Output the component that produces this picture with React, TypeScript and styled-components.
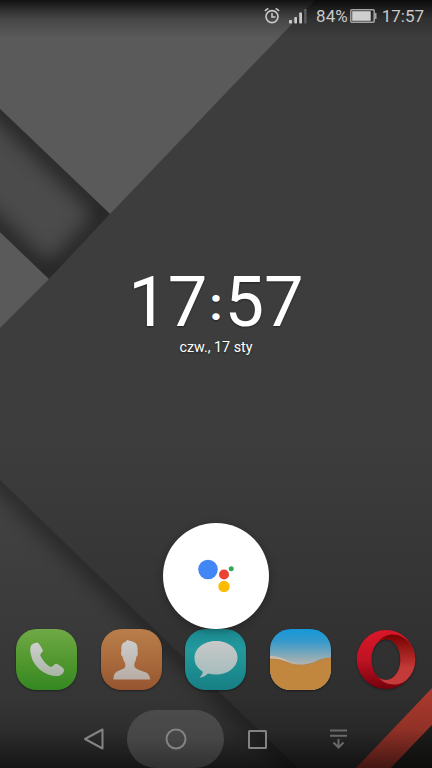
import React from "react";
import styled, { createGlobalStyle } from "styled-components";

const GlobalStyle = createGlobalStyle`
  * { box-sizing: border-box; }
  body { margin: 0; background: #3d3d3d; overflow: hidden; }
`;

const Screen = styled.main`
  position: relative;
  display: flex;
  flex-direction: column;
  width: 432px;
  height: 768px;
  overflow: hidden;
  font-family: Roboto, "Liberation Sans", sans-serif;
  isolation: isolate;
`;

const WallpaperArt = styled.svg`
  position: absolute;
  inset: 0;
  z-index: -1;
`;

const StatusBar = styled.header`
  display: flex;
  align-items: center;
  justify-content: flex-end;
  height: 32px;
  padding-right: 8px;
  color: #c9c9c9;
  font-size: 17px;
  line-height: 32px;
`;

const AlarmIcon = styled.svg`
  margin: 0 9px 1px 0;
`;

const SignalIcon = styled.svg`
  margin-right: 9px;
`;

const BatteryIcon = styled.svg`
  margin: 0 5px 1px 2px;
`;

const ClockWidget = styled.section`
  display: flex;
  flex-direction: column;
  align-items: center;
  margin-top: 235px;
  height: 256px;
  color: #fff;
  text-shadow: 0 1px 2px rgba(0, 0, 0, 0.45);
`;

const Time = styled.time`
  display: flex;
  font-size: 70.5px;
  line-height: 70px;
  height: 71px;
`;

const Colon = styled.span`
  width: 17px;
  text-align: center;
  font-size: 46px;
  font-weight: 700;
  line-height: 75px;
`;

const DateText = styled.span`
  font-size: 14.3px;
  line-height: 18px;
`;

const AssistantButton = styled.button`
  display: flex;
  flex: none;
  align-self: center;
  width: 106px;
  height: 106px;
  padding: 0;
  border: 0;
  border-radius: 50%;
  background: #fff;
  box-shadow: 0 2px 8px rgba(0, 0, 0, 0.3);
  z-index: 1;
`;

const Dock = styled.nav`
  display: flex;
  justify-content: space-between;
  height: 81px;
  padding: 0 16.5px 0 16px;
`;

const AppIcon = styled.svg`
  flex: none;
  filter: drop-shadow(0 1px 1px rgba(0, 0, 0, 0.4));
  overflow: visible;
`;

const NavBar = styled.footer`
  display: flex;
  flex: none;
  height: 58px;
  padding-left: 61px;
`;

const NavButton = styled.button<{ $width: number; $pressed?: boolean }>`
  display: flex;
  flex: none;
  align-items: center;
  justify-content: center;
  width: ${(p) => p.$width}px;
  height: 58px;
  padding: 0;
  border: 0;
  border-radius: 29px;
  background: ${(p) =>
    p.$pressed ? "linear-gradient(#4b4b4b, #464646 50%, #303030)" : "transparent"};
`;

const NavGlyph = styled.svg<{ $tone?: string }>`
  fill: none;
  stroke: ${(p) => p.$tone ?? "#838383"};
  stroke-width: 2;
`;

function Wallpaper() {
  return (
    <WallpaperArt width="432" height="768" viewBox="0 0 432 768" aria-hidden="true">
      <defs>
        <linearGradient id="topShade" x1="0" y1="0" x2="0" y2="1">
          <stop offset="0" stopColor="#000" stopOpacity=".82" />
          <stop offset=".2" stopColor="#000" stopOpacity=".56" />
          <stop offset=".5" stopColor="#000" stopOpacity=".22" />
          <stop offset="1" stopColor="#000" stopOpacity="0" />
        </linearGradient>
        <linearGradient id="bottomShade" x1="0" y1="0" x2="0" y2="1">
          <stop offset="0" stopColor="#000" stopOpacity="0" />
          <stop offset=".78" stopColor="#000" stopOpacity=".24" />
          <stop offset=".88" stopColor="#000" stopOpacity=".34" />
          <stop offset="1" stopColor="#000" stopOpacity=".7" />
        </linearGradient>
        <filter
          id="soft"
          filterUnits="userSpaceOnUse"
          x="-100"
          y="0"
          width="632"
          height="900"
          colorInterpolationFilters="sRGB"
        >
          <feGaussianBlur stdDeviation="11" />
        </filter>
        <clipPath id="channel">
          <path d="M0 109 110 214 49 279 0 232Z" />
        </clipPath>
        <clipPath id="corner">
          <path d="M0 480 298 768H0Z" />
        </clipPath>
      </defs>
      <path fill="#3d3d3d" d="M0 0h432v768H0z" />
      <path fill="#5a5a5a" d="M0 0H315L110 214 0 109ZM0 232l49 47-49 49Z" />
      <g clipPath="url(#channel)">
        <path fill="#4b4b4b" d="M0 100h120v190H0z" />
        <path
          d="M-30 80 110 214 49 279-30 203"
          fill="none"
          stroke="#000"
          strokeWidth="13"
          opacity=".85"
          filter="url(#soft)"
        />
      </g>
      <g clipPath="url(#corner)">
        <path fill="#464646" d="M0 470h300v298H0z" />
        <path d="M-40 441 340 808" stroke="#000" strokeWidth="10" opacity=".8" filter="url(#soft)" />
      </g>
      <path fill="#dd4a3b" d="M432 688v37l-41 43h-35z" />
      <path fill="#2b2c29" d="M432 725v43h-41z" />
      <path fill="url(#topShade)" d="M0 0h432v38H0z" />
      <path fill="url(#bottomShade)" d="M0 440h432v328H0z" />
    </WallpaperArt>
  );
}

const TILE = "M21 0H40Q49 0 55 6T61 21V40Q61 49 55 55T40 61H21Q12 61 6 55T0 40V21Q0 12 6 6T21 0Z";

function Shade({ id, stops }: { id: string; stops: string[] }) {
  return (
    <linearGradient id={id} x1="0" y1="0" x2="0" y2="1">
      {stops.map((color, i) => (
        <stop key={color} offset={i / (stops.length - 1)} stopColor={color} />
      ))}
    </linearGradient>
  );
}

function PhoneIcon() {
  return (
    <AppIcon width="61" height="61" viewBox="0 0 61 61" role="img" aria-label="Phone">
      <defs>
        <Shade id="green" stops={["#70a947", "#52982f", "#348821"]} />
        <Shade id="silver" stops={["#cfcfcf", "#a9b5a4"]} />
      </defs>
      <path fill="url(#green)" d={TILE} />
      <path
        fill="url(#silver)"
        d="M15.5 16Q17.5 13.5 21.5 13.5Q23 14 27 21.5Q26.5 23 24.5 25Q24 26.3 25 28Q29 35 34.5 38Q36 38.3 38.7 35.3Q40 34.3 41.3 35Q47.5 38.7 48.3 41Q47.5 45 44 46.5Q40 48 32 45.5Q22 41.5 17 32Q13.3 23 14.5 18Z"
      />
    </AppIcon>
  );
}

function ContactsIcon() {
  return (
    <AppIcon width="61" height="61" viewBox="0 0 61 61" role="img" aria-label="Contacts">
      <defs>
        <Shade id="copper" stops={["#b97e4b", "#aa6b3d", "#965530"]} />
        <Shade id="person" stops={["#cccccc", "#b8aca5"]} />
      </defs>
      <path fill="url(#copper)" d={TILE} />
      <path
        fill="url(#person)"
        d="M12.5 50.5Q12.3 44.5 16 42.5Q19 41 23 39.5Q25 38 24 34Q22 31 21.5 27.5Q19.5 26 20 23L20.5 22Q19.5 15 23 13.5L25 12.5 26 11Q31 12 34.5 14Q37 16 36.5 22.5Q37.5 26 35.5 27.5Q35 32 33.5 34Q32.7 38 35 39.5Q38.5 41.5 43 42.8Q49 44.5 49 50.5Z"
      />
    </AppIcon>
  );
}

function MessagesIcon() {
  return (
    <AppIcon width="61" height="61" viewBox="0 0 61 61" role="img" aria-label="Messages">
      <defs>
        <Shade id="teal" stops={["#1b898f", "#22999e", "#1c8d91", "#177f84"]} />
        <Shade id="bubble" stops={["#c8c8c8", "#a3bcbc"]} />
      </defs>
      <path fill="url(#teal)" d={TILE} />
      <path
        fill="url(#bubble)"
        d="M31 12C43 12 52.5 19 52.5 28.5S43 45.5 31 45.5Q27 45.5 23 44.5Q19 48.5 14.5 48.7Q17 46.8 18 42.7C12.5 39.6 9.5 34.5 9.5 29C9.5 19 19 12 31 12Z"
      />
    </AppIcon>
  );
}

function GalleryIcon() {
  return (
    <AppIcon width="61" height="61" viewBox="0 0 61 61" role="img" aria-label="Gallery">
      <defs>
        <linearGradient id="sky" x1="0" y1="0" x2="0" y2="1">
          <stop offset="0" stopColor="#1598d8" />
          <stop offset=".2" stopColor="#3599cb" />
          <stop offset=".5" stopColor="#99aeb4" />
          <stop offset=".64" stopColor="#c3b9ad" />
        </linearGradient>
        <clipPath id="tile">
          <path d={TILE} />
        </clipPath>
      </defs>
      <g clipPath="url(#tile)">
        <path fill="url(#sky)" d="M0 0h61v61H0z" />
        <path fill="#c9b9a8" d="M0 27Q10 27 18 32Q28 37 39 35L30 38H0Z" />
        <path fill="#c1873f" d="M0 30Q9 30 16 33Q24 37 34 36Q43 35 50 31Q55 29 61 29V61H0Z" />
        <path fill="none" stroke="#b07b40" strokeWidth=".8" d="M0 30Q9 30 16 33Q24 37 34 36Q43 35 50 31Q55 29 61 29" />
      </g>
    </AppIcon>
  );
}

function OperaIcon() {
  return (
    <AppIcon width="61" height="61" viewBox="0 0 61 61" role="img" aria-label="Opera">
      <defs>
        <Shade id="operaRed" stops={["#d9182a", "#c01323", "#75000d"]} />
        <Shade id="operaInner" stops={["#780000", "#9d1d1a", "#c13a38", "#c43c3c"]} />
      </defs>
      <path
        fill="url(#operaRed)"
        fillRule="evenodd"
        d="M31 1a29.3 29.5 0 1 1 0 59a29.3 29.5 0 1 1 0-59ZM30.9 10C22.8 10 16.5 19 16.5 30.5S22.8 51 30.9 51S45.5 42 45.5 30.5S39 10 30.9 10Z"
      />
      <path
        fill="url(#operaInner)"
        d="M23.5 12.5C28 6.5 36 4 43.5 6.2Q48 7.8 52 11.2C63 22 63 40 51.5 51Q46 55.3 40 55.5Q30 56 23.5 48.6Q26.8 51 30.9 51C39 51 45.5 42 45.5 30.5S39 10 30.9 10Q26.8 10 23.5 12.5Z"
      />
    </AppIcon>
  );
}

export default function App() {
  return (
    <>
      <GlobalStyle />
      <Screen>
        <Wallpaper />
        <StatusBar>
          <AlarmIcon width="16" height="18" viewBox="0 0 16 18" fill="none" stroke="#c9c9c9" strokeWidth="1.6">
            <circle cx="8" cy="9.6" r="6" />
            <path d="M8 6v4h3.5M1 4.2Q2 2.1 4.4 1.4M15 4.2Q14 2.1 11.6 1.4" />
          </AlarmIcon>
          <SignalIcon width="18" height="16" viewBox="0 0 18 16" fill="#c9c9c9">
            <rect x="0" y="12" width="3" height="3.5" rx=".7" />
            <rect x="5.3" y="9" width="2.7" height="6.5" rx=".7" />
            <rect x="10.2" y="4.5" width="2.8" height="11" rx=".7" />
            <rect x="15.2" y="1" width="2.3" height="14.5" rx=".5" fill="#5e5e5e" />
          </SignalIcon>
          <span>84%</span>
          <BatteryIcon width="27" height="14" viewBox="0 0 27 14">
            <rect x=".8" y=".8" width="23.4" height="12.4" rx="1" fill="none" stroke="#a5a5a5" strokeWidth="1.5" />
            <rect x="2.2" y="2.2" width="18.5" height="9.6" fill="#cfcfcf" />
            <path d="M25 4h1.5v6H25z" fill="#a5a5a5" />
          </BatteryIcon>
          <span>17:57</span>
        </StatusBar>
        <ClockWidget>
          <Time>
            <span>17</span>
            <Colon>:</Colon>
            <span>57</span>
          </Time>
          <DateText>czw., 17 sty</DateText>
        </ClockWidget>
        <AssistantButton aria-label="Assistant">
          <svg width="106" height="106" viewBox="0 0 106 106">
            <circle cx="45" cy="46.5" r="9.8" fill="#4285f4" />
            <circle cx="61" cy="51.5" r="5" fill="#ea4335" />
            <circle cx="68.2" cy="45.7" r="2.5" fill="#34a853" />
            <circle cx="61" cy="63.5" r="5.7" fill="#fbbc05" />
          </svg>
        </AssistantButton>
        <Dock>
          <PhoneIcon />
          <ContactsIcon />
          <MessagesIcon />
          <GalleryIcon />
          <OperaIcon />
        </Dock>
        <NavBar>
          <NavButton $width={66} aria-label="Back">
            <NavGlyph width="22" height="24" viewBox="0 0 22 24">
              <path d="M19.5 2.5v19L2 12Z" strokeLinejoin="round" />
            </NavGlyph>
          </NavButton>
          <NavButton $width={97} $pressed aria-label="Home">
            <NavGlyph width="22" height="22" viewBox="0 0 22 22">
              <circle cx="11" cy="11" r="9.5" />
            </NavGlyph>
          </NavButton>
          <NavButton $width={67} aria-label="Recent apps">
            <NavGlyph width="21" height="21" viewBox="0 0 21 21">
              <rect x="2" y="2" width="17" height="17" rx=".5" />
            </NavGlyph>
          </NavButton>
          <NavButton $width={95} aria-label="Notification panel">
            <NavGlyph $tone="#696969" width="17" height="20" viewBox="0 0 17 20">
              <path d="M0 1.5h17M0 6.7h17M8.5 10v8.5M3.5 13.5l5 5 5-5" />
            </NavGlyph>
          </NavButton>
        </NavBar>
      </Screen>
    </>
  );
}
